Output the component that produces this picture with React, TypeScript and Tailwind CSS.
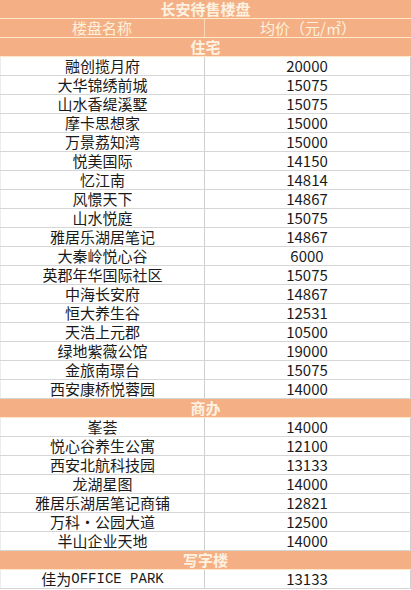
import React from 'react';

type Row = { name: string; price: string };

const sections: { title: string; rows: Row[] }[] = [
  {
    title: '住宅',
    rows: [
      { name: '融创揽月府', price: '20000' },
      { name: '大华锦绣前城', price: '15075' },
      { name: '山水香缇溪墅', price: '15075' },
      { name: '摩卡思想家', price: '15000' },
      { name: '万景荔知湾', price: '15000' },
      { name: '悦美国际', price: '14150' },
      { name: '忆江南', price: '14814' },
      { name: '风憬天下', price: '14867' },
      { name: '山水悦庭', price: '15075' },
      { name: '雅居乐湖居笔记', price: '14867' },
      { name: '大秦岭悦心谷', price: '6000' },
      { name: '英郡年华国际社区', price: '15075' },
      { name: '中海长安府', price: '14867' },
      { name: '恒大养生谷', price: '12531' },
      { name: '天浩上元郡', price: '10500' },
      { name: '绿地紫薇公馆', price: '19000' },
      { name: '金旅南璟台', price: '15075' },
      { name: '西安康桥悦蓉园', price: '14000' },
    ],
  },
  {
    title: '商办',
    rows: [
      { name: '峯荟', price: '14000' },
      { name: '悦心谷养生公寓', price: '12100' },
      { name: '西安北航科技园', price: '13133' },
      { name: '龙湖星图', price: '14000' },
      { name: '雅居乐湖居笔记商铺', price: '12821' },
      { name: '万科·公园大道', price: '12500' },
      { name: '半山企业天地', price: '14000' },
    ],
  },
  {
    title: '写字楼',
    rows: [{ name: '佳为', price: '13133' }],
  },
];

const font = "font-['Noto_Sans_CJK_SC','Liberation_Sans',sans-serif]";

const SectionHead = ({ title }: { title: string }) => (
  <div className="h-[19px] bg-[#f4b084] border-b border-[#fde9c9] flex items-center justify-center text-[15px] leading-[18px] font-semibold text-[#fdf2e2]">
    {title}
  </div>
);

const DataRow = ({ row }: { row: Row }) => (
  <div className="h-[19px] grid grid-cols-[205px_1fr] border-b border-[#d6d6d6] text-[15px] leading-[18px] text-[#1a1a1a]">
    <div className="flex items-center justify-center border-r border-[#cfcfcf] border-l border-l-[#ececec] whitespace-nowrap">
      {row.name}
      {row.name === '佳为' && (
        <span className="font-['Liberation_Mono',monospace] text-[14px] leading-[18px]">OFFICE PARK</span>
      )}
    </div>
    <div className="flex items-center justify-center border-r border-[#cfcfcf] pr-[1px]">{row.price}</div>
  </div>
);

export default function App() {
  return (
    <div className={`w-[411px] h-[590px] overflow-hidden bg-white ${font}`}>
      <div className="h-[19px] bg-[#f4b084] border-b border-[#fde9c9] flex items-center justify-center text-[15px] leading-[18px] font-bold text-[#fdf2e2]">
        长安待售楼盘
      </div>
      <div className="h-[19px] bg-[#f4b084] border-b border-[#fde9c9] grid grid-cols-[205px_1fr] text-[15px] leading-[18px] text-[#fdf0dc]">
        <div className="flex items-center justify-center border-r border-[#fbd9b4]">楼盘名称</div>
        <div className="flex items-center justify-center">均价（元/㎡）</div>
      </div>
      {sections.map(s => (
        <div key={s.title}>
          <SectionHead title={s.title} />
          {s.rows.map(r => (
            <DataRow key={r.name} row={r} />
          ))}
        </div>
      ))}
    </div>
  );
}
